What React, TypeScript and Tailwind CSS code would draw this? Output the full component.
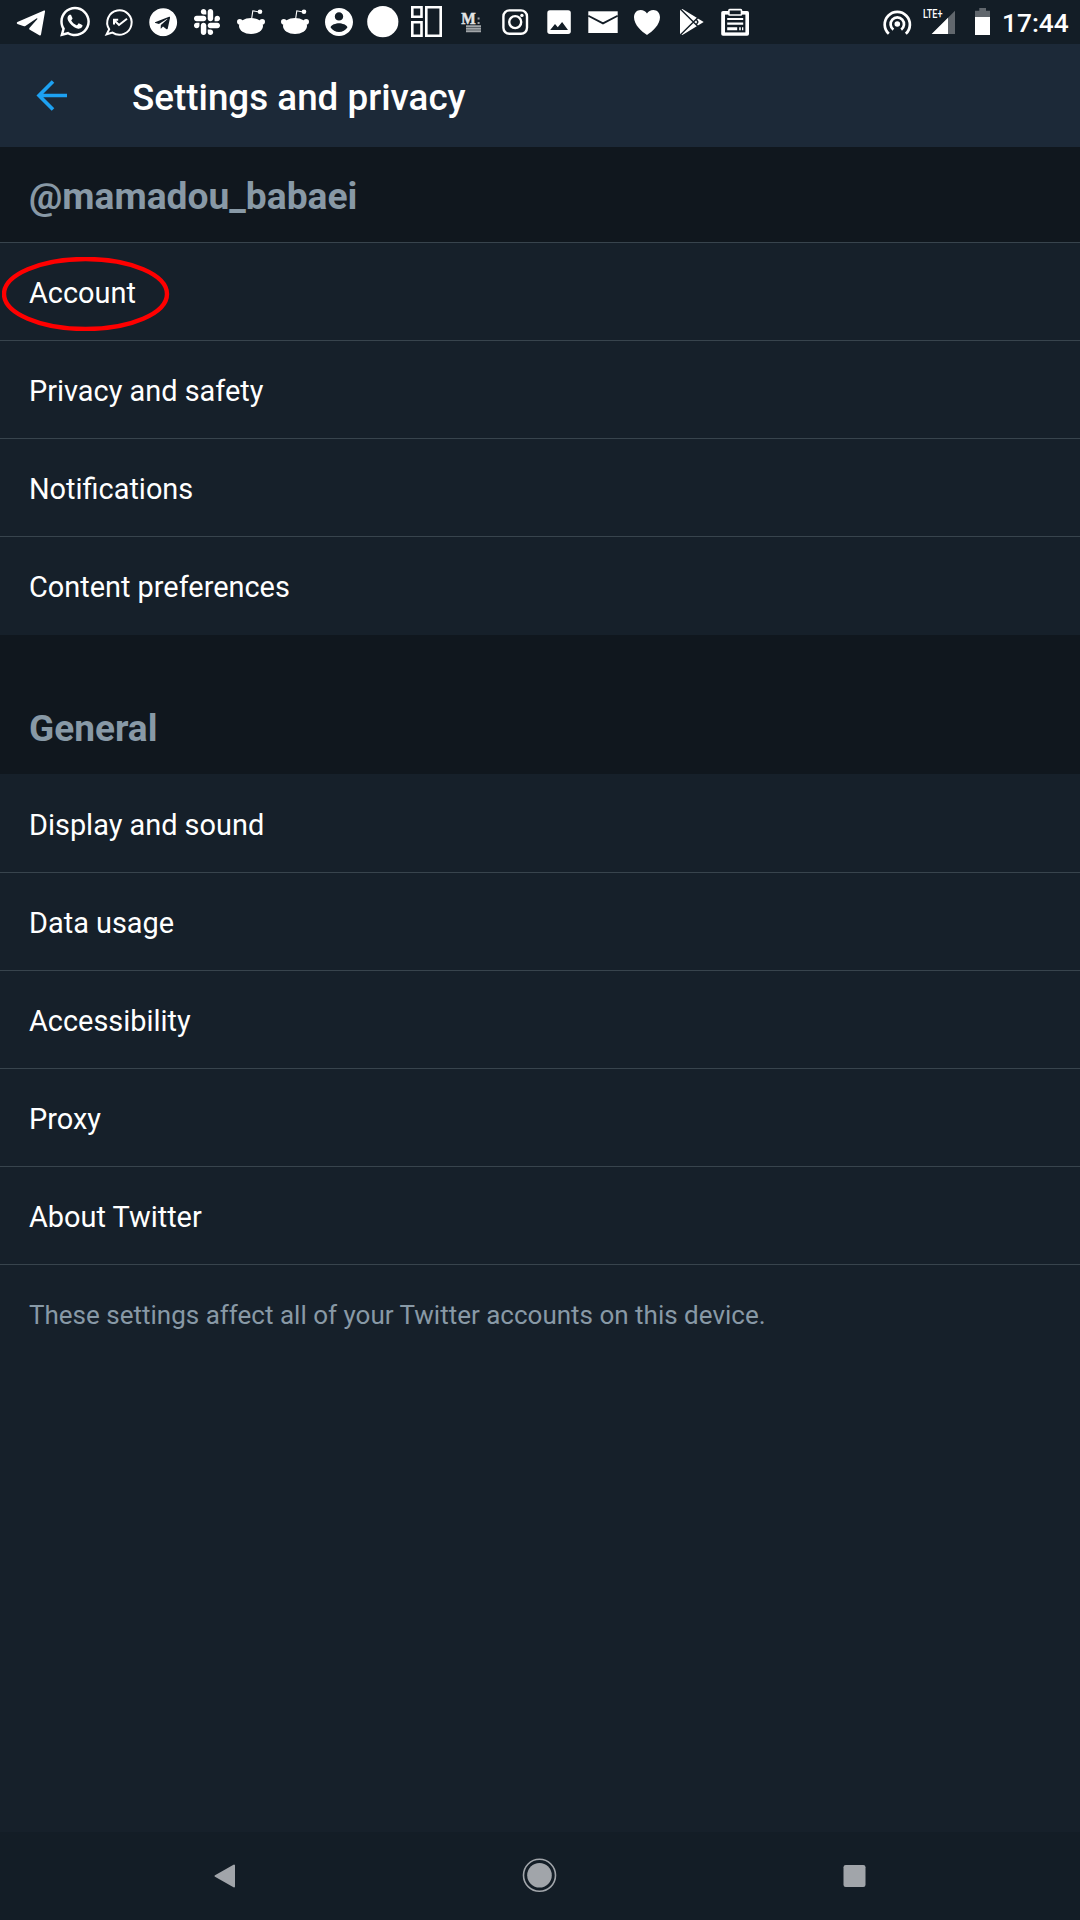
import type { ReactNode } from "react";
import { FaSlack, FaTelegram, FaWhatsapp } from "react-icons/fa";

const DARK = "#131d26";

function Slot({ children }: { children: ReactNode }) {
  return (
    <svg className="h-11 w-11 shrink-0 text-white" viewBox="0 0 44 44" fill="currentColor">
      {children}
    </svg>
  );
}

function Reddit() {
  return (
    <Slot>
      <ellipse cx="22" cy="26" rx="12" ry="8" />
      <circle cx="10.8" cy="21.8" r="2.8" />
      <circle cx="33.2" cy="21.8" r="2.8" />
      <path d="M22.6 19L23.8 10.8L30 12" fill="none" stroke="currentColor" strokeWidth="1.1" />
      <circle cx="31" cy="11.7" r="2.3" />
    </Slot>
  );
}

function NotificationIcons() {
  return (
    <div className="flex">
      <Slot>
        <path d="M8.4 21.9L35 10.6Q36.4 10.2 36 11.8L32 34.6Q31.6 36 30.3 35.2L20.4 29.4Q19.9 28.6 20.4 28L28.4 19Q28.6 18 27.4 18.4L16.4 25.9Q15.4 26.5 14.2 26.1L8.4 24Q6.9 23 8.4 21.9Z" />
      </Slot>
      <Slot>
        <FaWhatsapp x="5" y="4.7" size="34" />
      </Slot>
      <Slot>
        <path d="M12.2 29.2A12.2 12.2 0 1 1 15.5 32.6L9.6 34.3Z" fill="none" stroke="currentColor" strokeWidth="2" />
        <path d="M17 24.5V19.8H21.2M17 20L22 25L30 18.7" fill="none" stroke="currentColor" strokeWidth="2" />
      </Slot>
      <Slot>
        <FaTelegram x="7.8" y="7.8" size="28.8" />
      </Slot>
      <Slot>
        <FaSlack x="7.1" y="7.1" size="29.8" />
      </Slot>
      <Reddit />
      <Reddit />
      <Slot>
        <path
          transform="translate(5.2 5.2) scale(1.4)"
          d="M12 2C6.48 2 2 6.48 2 12s4.48 10 10 10 10-4.48 10-10S17.52 2 12 2zm0 3c1.66 0 3 1.34 3 3s-1.34 3-3 3-3-1.34-3-3 1.34-3 3-3zm0 14.2c-2.5 0-4.71-1.28-6-3.22.03-1.99 4-3.08 6-3.08 1.99 0 5.97 1.09 6 3.08-1.29 1.94-3.5 3.22-6 3.22z"
        />
      </Slot>
      <Slot>
        <circle cx="21.8" cy="21.7" r="15.6" />
      </Slot>
      <Slot>
        <g fill="none" stroke="currentColor" strokeWidth="2.6">
          <path d="M7.3 7.3H16.5V16.7H7.3ZM7.3 22.3H16.5V35.7H7.3ZM21.3 7.3H35.7V35.7H21.3Z" />
        </g>
      </Slot>
      <Slot>
        <text x="12.3" y="24" fill="#e4e5e6" stroke="#e4e5e6" strokeWidth=".5" fontFamily="Liberation Serif, serif" fontWeight="700" fontSize="17" textLength="14.5" lengthAdjust="spacingAndGlyphs">M</text>
        <path d="M28.6 17.5h2v2h-2zM28.6 22h2v2h-2zM17 25.3h15v1.9H17zM17 27.8h15v1.9H17zM17 30.3h15v1.9H17z" fill="#a1a5a8" />
      </Slot>
      <Slot>
        <g fill="none" stroke="currentColor" strokeWidth="2.4">
          <rect x="10.4" y="10.4" width="23.6" height="23.4" rx="6" />
          <circle cx="22.2" cy="22.1" r="6" />
        </g>
        <circle cx="28.9" cy="15.4" r="1.7" />
      </Slot>
      <Slot>
        <rect x="10.3" y="10.3" width="23.5" height="23.6" rx="2.6" />
        <path d="M13.2 30L18 24L20.8 27.3L25.1 22L31 30Z" fill={DARK} />
      </Slot>
      <Slot>
        <path d="M7.3 11.3H36.7V33H7.3Z" />
        <path d="M7.3 15.8L22 23.4L36.7 15.8" fill="none" stroke={DARK} strokeWidth="1.8" />
      </Slot>
      <Slot>
        <path d="M22 35C17 31.5 9 25 9 17.2C9 12.8 12 10 15.6 10C18.3 10 20.7 11.3 22 13.6C23.3 11.3 25.7 10 28.4 10C32 10 35 12.8 35 17.2C35 25 27 31.5 22 35Z" />
      </Slot>
      <Slot>
        <path d="M11 10.2L13.4 9L34.7 21.9L13.4 35L11 33.8Z" />
        <path d="M11.8 9.4L30 27.5M11.8 34.6L30 16.5M27 18.8L28.9 22L27 25.2" fill="none" stroke={DARK} strokeWidth="1.4" />
      </Slot>
      <Slot>
        <rect x="8.2" y="11" width="27.8" height="24.7" rx="1.8" />
        <path d="M12 14.6H32.4V32.4H12Z" fill={DARK} />
        <path d="M14.2 18.1h16v2h-16zM14.2 22.6h16v2.2h-16zM14.2 27.2h10v3.1h-10zM26.2 27.2h1.6v3.1h-1.6zM29 27.2h1.3v3.1H29z" />
        <rect x="15.9" y="9.6" width="12.6" height="5.4" rx=".8" fill={DARK} stroke="currentColor" strokeWidth="1.6" />
      </Slot>
    </div>
  );
}

function StatusBar() {
  return (
    <div className="flex h-11 items-center bg-[#131d26] pl-[9px] text-white">
      <NotificationIcons />
      <svg className="ml-[126px] h-11 w-[112px] shrink-0" viewBox="883 0 112 44">
        <g fill="none" stroke="#fff" strokeWidth="2.7">
          <path d="M888.8 33.8A12.6 12.6 0 1 1 905.8 33.8" />
          <path d="M893.4 29.6A6.7 6.7 0 1 1 901.2 29.6" />
        </g>
        <circle cx="897.3" cy="24" r="2.8" fill="#fff" />
        <text x="923" y="17.8" fill="#fff" fontFamily="Roboto, sans-serif" fontSize="12.6" fontWeight="500" textLength="19.5" lengthAdjust="spacingAndGlyphs">LTE+</text>
        <path d="M931.7 34L955 10.7V34Z" fill="#61676d" />
        <path d="M931.7 34L948 17.7V34Z" fill="#fff" />
        <path d="M975 10.7H979.3V8H986V10.7H990V20H975Z" fill="#61676d" />
        <path d="M975 17H990V35H975Z" fill="#fff" />
      </svg>
      <span className="ml-[7px] pt-[2px] text-[26.3px] leading-[42px] font-medium">17:44</span>
    </div>
  );
}

function Row({ label, children, first }: { label: string; children?: ReactNode; first?: boolean }) {
  return (
    <div
      className={
        first
          ? "relative flex h-[98px] items-center px-[29px] pt-[3px]"
          : "relative flex h-[98px] items-center border-t border-[#38444d] px-[29px] pt-[2px]"
      }
    >
      <span className="text-[28.9px] leading-[34px] text-white">{label}</span>
      {children}
    </div>
  );
}

export default function App() {
  return (
    <div className="flex h-[1920px] w-[1080px] flex-col overflow-hidden bg-[#16202a] font-['Roboto',sans-serif]">
      <StatusBar />
      <header className="flex h-[103px] items-center bg-[#1c2938]">
        <svg className="ml-[36px] h-8 w-8" viewBox="0 0 32 32" fill="none" stroke="#1da1f2" strokeWidth="3.6">
          <path d="M31 15.5H3M17 1.5L3 15.5L17 29.5" />
        </svg>
        <h1 className="ml-[64px] pt-[5px] text-[36.8px] leading-[44px] font-medium text-white">Settings and privacy</h1>
      </header>
      <h2 className="h-[95px] bg-[#10171e] px-[29px] pt-[27px] text-[37.2px] leading-[44px] font-bold text-[#8899a6]">
        @mamadou_babaei
      </h2>
      <Row label="Account">
        <svg className="absolute top-[14px] left-[2px] h-[74px] w-[168px]" viewBox="0 0 168 74" fill="none">
          <ellipse cx="83.5" cy="37" rx="81.5" ry="35" stroke="#f00" strokeWidth="4.4" />
        </svg>
      </Row>
      <Row label="Privacy and safety" />
      <Row label="Notifications" />
      <Row label="Content preferences" />
      <h2 className="mt-px h-[139px] bg-[#10171e] px-[29px] pt-[72px] text-[37px] leading-[44px] font-bold text-[#8899a6]">
        General
      </h2>
      <Row label="Display and sound" first />
      <Row label="Data usage" />
      <Row label="Accessibility" />
      <Row label="Proxy" />
      <Row label="About Twitter" />
      <p className="border-t border-[#38444d] px-[29px] pt-[34px] text-[26px] leading-[32px] text-[#8899a6]">
        These settings affect all of your Twitter accounts on this device.
      </p>
      <nav className="mt-auto flex h-[88px] items-center bg-[#131d26]">
        <svg className="h-[88px] w-full" viewBox="0 0 1080 88" fill="#a1a5aa">
          <path d="M215.5 44L234 33.5V54.5Z" stroke="#a1a5aa" strokeWidth="2" strokeLinejoin="round" />
          <circle cx="539.5" cy="43.3" r="12.3" />
          <circle cx="539.5" cy="43.3" r="16" fill="none" stroke="#a1a5aa" strokeWidth="1.6" />
          <rect x="843.5" y="33" width="22" height="22" rx="2.2" />
        </svg>
      </nav>
    </div>
  );
}
